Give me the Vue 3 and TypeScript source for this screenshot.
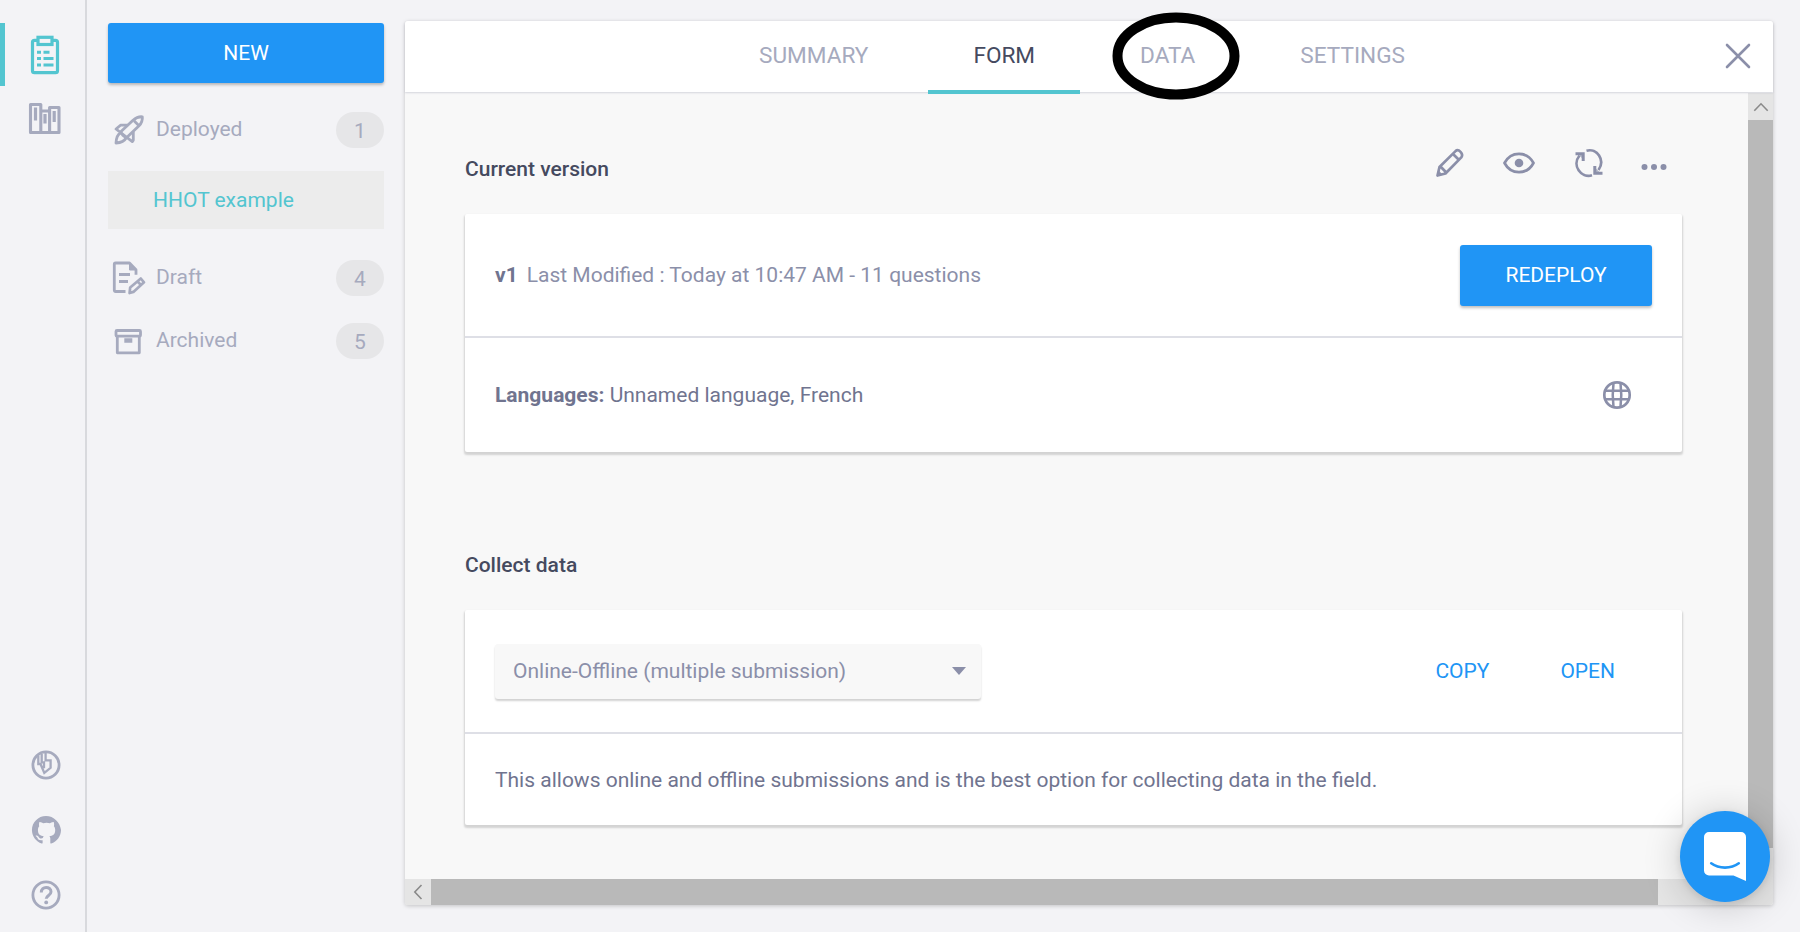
<script setup lang="ts">
interface Group { id: string; label: string; count: number }
const groups: Group[] = [
  { id: 'deployed', label: 'Deployed', count: 1 },
  { id: 'draft', label: 'Draft', count: 4 },
  { id: 'archived', label: 'Archived', count: 5 },
]
const tabs: string[] = ['SUMMARY', 'FORM', 'DATA', 'SETTINGS']
const activeTab = 'FORM'
</script>

<template>
  <div class="app">
    <nav class="rail">
      <div class="rail-top">
        <a class="rail-item active">
          <svg width="32" height="42" viewBox="0 0 32 42" fill="none" stroke="currentColor">
            <rect x="3.5" y="6.3" width="25" height="32.4" rx="2" stroke-width="3.2" />
            <rect x="9" y="3.3" width="14" height="7.2" stroke-width="3.2" fill="#f3f3f6" />
            <path d="M8 18.3h4M8 24.5h4M8 31h4M14.5 18.3h6M14.5 24.5h10M14.5 31h10" stroke-width="3" />
          </svg>
        </a>
        <a class="rail-item">
          <svg width="34" height="34" viewBox="0 0 34 34" fill="none" stroke="currentColor">
            <path d="M2.500 3.500h10.300v28H2.500zM12.800 10h8.800v21.500h-8.800M21.600 6.500h9.400v25h-9.400z" stroke-width="3.100" stroke-linejoin="round" />
            <path d="M7.500 6.500v13M17 13v9.500M26.200 10v11" stroke-width="3.200" />
          </svg>
        </a>
      </div>
      <div class="rail-bottom">
        <svg width="30" height="30" viewBox="0 0 30 30" fill="none" stroke="currentColor">
          <circle cx="15" cy="15" r="13.100" stroke-width="2.800" />
          <path d="M7.300 5.500v8.500h2.200L13.300 23l6.300-5.200v-7.500h-5V2.500M10.700 4v8.300h2.300v6" stroke-width="2.300" />
        </svg>
        <svg width="30" height="30" viewBox="0 0 16 16" fill="currentColor">
          <path d="M8 .5C3.800.5.500 3.900.500 8c0 3.400 2.200 6.200 5.200 7.200.4.100.5-.2.500-.4v-1.400c-2.100.5-2.600-.9-2.600-.9-.3-.9-.8-1.100-.8-1.100-.7-.5.100-.5.100-.5.800.1 1.200.8 1.200.8.700 1.200 1.800.8 2.200.6.100-.5.300-.8.500-1-1.700-.2-3.100-.8-3.100-3.300 0-.8.200-1.500.7-2-.1-.2-.3-1.200.1-2.300 0 0 .6-.1 2 .7a7 7 0 0 1 3.600 0c1.400-.8 2-.7 2-.7.400 1.100.200 2.100.100 2.300.5.500.7 1.200.7 2 0 2.500-1.400 3.100-3.100 3.300.3.200.5.700.5 1.400v2.100c0 .2.100.5.500.4 3-1 5.200-3.800 5.200-7.200C15.500 3.900 12.200.5 8 .5Z" />
        </svg>
        <svg width="30" height="30" viewBox="0 0 30 30" fill="none" stroke="currentColor">
          <circle cx="15" cy="15" r="13.100" stroke-width="2.800" />
          <path d="M10.300 12.500c0-6.800 9.700-6.300 9.700-.8 0 3.900-4.800 3.500-4.800 7.100" stroke-width="3" />
          <circle cx="15.200" cy="22.400" r="1.900" fill="currentColor" stroke="none" />
        </svg>
      </div>
    </nav>

    <aside class="sidebar">
      <button class="btn new">NEW</button>
      <template v-for="g in groups" :key="g.id">
        <div class="group" :class="g.id">
          <span class="group-icon">
            <svg v-if="g.id === 'deployed'" width="36" height="36" viewBox="0 0 36 36" fill="none" stroke="currentColor" stroke-width="2.800" stroke-linejoin="round">
              <path d="M12 23.500 9.500 20 22 8.200c3-2.600 6.200-3.700 9.300-3.400.4 3.400-.8 6.400-3.500 9.300L15.200 26z" />
              <path d="M23 8.800l4.500 4.500M16.500 13.200H9.500L5 17l16.300 12.600 1-1.500V19.800M9.500 21c-3.200 1.500-4.200 4.500-4.500 10 5-.3 8.200-1.400 10-5" />
            </svg>
            <svg v-else-if="g.id === 'draft'" width="36" height="36" viewBox="0 0 36 36" fill="none" stroke="currentColor" stroke-width="2.800">
              <path d="M14.500 31.500H4.500a1.200 1.200 0 0 1-1.200-1.200V4.200A1.200 1.200 0 0 1 4.500 3H18.500l6.500 6.800v5" stroke-linejoin="round" />
              <path d="M18.500 3v7H26z" fill="currentColor" stroke-width="1" />
              <path d="M8 14.500h11M8 21.500h9" />
              <path d="M18.600 33l.6-5.500L29.800 18.500l3.200 3.800-10.600 9.600zM26.500 21.500l3.500 3.500" stroke-linejoin="round" stroke-width="2.700" />
            </svg>
            <svg v-else width="36" height="36" viewBox="0 0 36 36" fill="none" stroke="currentColor" stroke-width="2.800">
              <rect x="5" y="7.500" width="24.500" height="5.700" rx="1" />
              <path d="M6.300 13.500v16.300h22V13.500" stroke-linejoin="round" />
              <path d="M13.300 17.500h8" stroke-width="4.500" />
            </svg>
          </span>
          <span class="group-label">{{ g.label }}</span>
          <span class="count">{{ g.count }}</span>
        </div>
        <a v-if="g.id === 'deployed'" class="project">HHOT example</a>
      </template>
    </aside>

    <main class="panel">
      <header class="tabs">
        <a v-for="t in tabs" :key="t" class="tab" :class="{ current: t === activeTab }">
          {{ t }}
          <svg v-if="t === 'DATA'" class="ring" width="128" height="88" viewBox="0 0 128 88">
            <ellipse cx="64" cy="44" rx="58.500" ry="38.500" fill="none" stroke="#000" stroke-width="10" />
          </svg>
        </a>
        <svg class="close" width="26" height="26" viewBox="0 0 26 26" fill="none" stroke="currentColor" stroke-width="2.600" stroke-linecap="round">
          <path d="M2 2l22 22M24 2L2 24" />
        </svg>
      </header>

      <div class="scroller">
        <div class="content">
          <section>
            <div class="section-head">
              <h2>Current version</h2>
              <div class="tools">
                <svg width="30" height="30" viewBox="0 0 30 30" fill="none" stroke="currentColor" stroke-width="2.700" stroke-linejoin="round">
                  <path d="M2.500 27.500l2-8.500L20.800 2.900c2.600-2.200 8.200 2.700 5.500 6.500L10.500 25.500zM18 6l5.800 5.800M5.500 18.500l6 6.200" />
                  <path d="M2.500 27.500l1-4.500 3.500 3.500z" fill="currentColor" stroke-width="1" />
                </svg>
                <svg width="34" height="30" viewBox="0 0 34 30" fill="none" stroke="currentColor">
                  <path d="M2.500 15C9 2.800 25 2.800 31.500 15 25 27.200 9 27.200 2.500 15z" stroke-width="2.700" stroke-linejoin="round" />
                  <circle cx="17" cy="15" r="4.300" fill="currentColor" stroke="none" />
                </svg>
                <svg width="30" height="30" viewBox="0 0 30 30" fill="none" stroke="currentColor" stroke-width="2.700">
                  <path d="M12.500 2.700C23-.2 31.500 12 24.500 22M18 27.300C7 30.500-2.500 17.500 5.500 7.500" />
                  <path d="M1.500 5.800H9.200V13M28.500 25.300H20.800V18" stroke-width="3" />
                  <path d="M9.500 5v7L4 5.500zM20.500 26v-7l6 6z" fill="currentColor" stroke="none" opacity=".6" />
                </svg>
                <svg width="26" height="30" viewBox="0 0 26 30" fill="currentColor">
                  <circle cx="3.500" cy="19" r="3" /><circle cx="13" cy="19" r="3" /><circle cx="22.500" cy="19" r="3" />
                </svg>
              </div>
            </div>
            <div class="card">
              <div class="row version">
                <p class="muted"><b>v1</b><span class="modified">Last Modified : Today at 10:47 AM - 11 questions</span></p>
                <button class="btn redeploy">REDEPLOY</button>
              </div>
              <div class="row languages">
                <p><b>Languages:</b> Unnamed language, French</p>
                <svg width="30" height="30" viewBox="0 0 30 30" fill="none" stroke="currentColor">
                  <circle cx="15" cy="15" r="12.700" stroke-width="2.700" />
                  <path d="M3.500 10.700h23M3.500 19.300h23" stroke-width="2.500" />
                  <path d="M11.500 3C10.600 10 10.600 20 11.500 27M18.500 3c.9 7 .9 17 0 24" stroke-width="2.500" />
                </svg>
              </div>
            </div>
          </section>

          <section class="collect">
            <h2>Collect data</h2>
            <div class="card">
              <div class="row method">
                <div class="select">
                  <span>Online-Offline (multiple submission)</span>
                  <i class="caret"></i>
                </div>
                <div class="links"><a>COPY</a><a>OPEN</a></div>
              </div>
              <div class="row help">
                <p>This allows online and offline submissions and is the best option for collecting data in the field.</p>
              </div>
            </div>
          </section>
        </div>

        <div class="vbar">
          <span class="arrow up">
            <svg width="16" height="10" viewBox="0 0 16 10" fill="none" stroke="#8a8a8a" stroke-width="1.600"><path d="M1.300 8.800L8 1.800l6.700 7" /></svg>
          </span>
          <span class="thumb"></span>
        </div>
        <div class="hbar">
          <span class="arrow left">
            <svg width="10" height="16" viewBox="0 0 10 16" fill="none" stroke="#8a8a8a" stroke-width="1.600"><path d="M8.500 1L1.800 8l6.700 7" /></svg>
          </span>
          <span class="thumb"></span>
        </div>
        <div class="corner"></div>
      </div>
    </main>

    <button class="chat">
      <svg width="42" height="49" viewBox="0 0 42 49">
        <path d="M5 0h32a5 5 0 0 1 5 5v44l-12.500-5.500H5a5 5 0 0 1-5-5V5a5 5 0 0 1 5-5z" fill="#fff" />
        <path d="M7.200 31.300c7.800 5.800 19.800 5.800 27.600 0" fill="none" stroke="#2095f5" stroke-width="2.600" stroke-linecap="round" />
      </svg>
    </button>
  </div>
</template>

<style>
html, body { margin: 0; background: #f3f3f6; overflow: hidden; }
</style>

<style scoped>
* { box-sizing: border-box; }
.app {
  display: grid;
  grid-template-columns: 87px 318px 1368px;
  height: 932px;
  font: 21px/28px Roboto, "Liberation Sans", sans-serif;
  background: #f3f3f6;
  color: #70748f;
}
p, h2 { margin: 0; }
svg { display: block; flex: none; }
.rail {
  display: flex;
  flex-direction: column;
  justify-content: space-between;
  border-right: 2px solid #d8d9dd;
  color: #a6aabe;
}
.rail-top { padding-top: 23px; }
.rail-item { display: flex; align-items: center; justify-content: center; height: 63px; padding-left: 5px; }
.rail-item.active { color: #53c5d0; border-left: 5px solid #53c5d0; padding: 0; }
.rail-bottom { display: flex; flex-direction: column; align-items: center; gap: 35px; padding: 0 0 22px 6px; }
.btn {
  border: 0;
  border-radius: 3px;
  background: #2095f5;
  color: #fff;
  font: inherit;
  box-shadow: 0 2px 3px rgba(0, 0, 0, .25);
}
.sidebar { display: flex; flex-direction: column; padding: 23px 21px 0; }
.new { height: 60px; padding: 0 0 1px; }
.group { display: flex; align-items: center; height: 36px; color: #a6aabe; }
.group.deployed { margin-top: 29px; }
.group.draft { margin-top: 31px; }
.group.archived { margin-top: 27px; }
.group-icon { width: 48px; padding-left: 3px; }
.group-label { flex: 1; margin-top: -3px; }
.count { width: 48px; height: 36px; border-radius: 18px; background: #e6e6e8; text-align: center; line-height: 38px; }
.project { height: 58px; margin-top: 23px; padding-left: 45px; background: #ececec; color: #53c5d0; line-height: 58px; }
.panel {
  display: flex;
  flex-direction: column;
  height: 884px;
  margin-top: 21px;
  border-radius: 3px;
  background: #f8f8f8;
  box-shadow: 0 1px 4px rgba(0, 0, 0, .2);
}
.tabs {
  position: relative;
  z-index: 1;
  display: flex;
  justify-content: center;
  gap: 15px;
  height: 71px;
  padding-right: 14px;
  background: #fff;
  border-radius: 3px 3px 0 0;
  box-shadow: 0 1px 2px rgba(70, 75, 110, .2);
}
.tab { position: relative; height: 73px; padding: 0 45px; color: #a6aabe; font-size: 22.6px; line-height: 69px; }
.tab.current { color: #454a5f; border-bottom: 4px solid #53c5d0; }
.ring { position: absolute; left: 50%; top: 50%; margin: -46px 0 0 -56px; }
.close { position: absolute; right: 22px; top: 22px; color: #8b8fa9; }
.scroller { flex: 1; display: grid; grid-template: 1fr 26px / 1fr 25px; padding-top: 1px; }
.content { padding: 54px 66px 0 60px; }
h2 { color: #454a5f; font-size: 21px; font-weight: 500; line-height: 28px; }
.section-head { display: flex; justify-content: space-between; height: 67px; padding-top: 8px; }
.tools { display: flex; gap: 37.5px; margin: -7px 15px 0 0; color: #8b8fa9; height: 30px; }
.card { background: #fff; border-radius: 2px; box-shadow: 0 2px 2px 1px rgba(0, 0, 0, .15); }
.row { display: flex; align-items: center; justify-content: space-between; padding: 0 30px; }
.row + .row { border-top: 2px solid #dedfe6; }
.version { height: 122px; }
.muted { color: #8b8fa9; }
.muted b { color: #70748f; }
.modified { margin-left: 9px; }
.redeploy { width: 192px; height: 61px; padding: 0 0 1px; }
.languages { height: 116px; padding-right: 50px; color: #70748f; }
.languages svg { color: #8b8fa9; }
.collect { margin-top: 99px; }
.collect h2 { height: 59px; }
.method { height: 122px; }
.select {
  display: flex;
  align-items: center;
  justify-content: space-between;
  width: 486px;
  height: 55px;
  padding: 0 15px 0 18px;
  border-radius: 3px;
  background: #f8f8f8;
  color: #8b8fa9;
  box-shadow: 0 2px 2px rgba(0, 0, 0, .18);
}
.caret { border: 7px solid transparent; border-top: 8px solid #8b8fa9; border-bottom: 0; }
.links { display: flex; gap: 71px; margin-right: 37px; color: #2095f5; }
.help { height: 93px; }
.vbar { display: flex; flex-direction: column; background: #e5e5e5; }
.arrow { display: flex; align-items: center; justify-content: center; flex: none; background: #e5e5e5; }
.up { height: 27px; }
.vbar .thumb { height: 728px; background: #b9b9b9; }
.hbar { display: flex; background: #e5e5e5; border-radius: 0 0 0 3px; overflow: hidden; }
.left { width: 26px; }
.hbar .thumb { width: 1227px; background: #b9b9b9; }
.corner { background: #e5e5e5; border-radius: 0 0 3px; }
.chat {
  position: fixed;
  z-index: 2;
  right: 30px;
  bottom: 30px;
  display: flex;
  align-items: center;
  justify-content: center;
  width: 90px;
  height: 91px;
  padding: 0;
  border: 0;
  border-radius: 50%;
  background: #2095f5;
  box-shadow: 0 2px 9px rgba(0, 0, 0, .1), 0 3px 38px rgba(0, 0, 0, .2);
}
</style>
